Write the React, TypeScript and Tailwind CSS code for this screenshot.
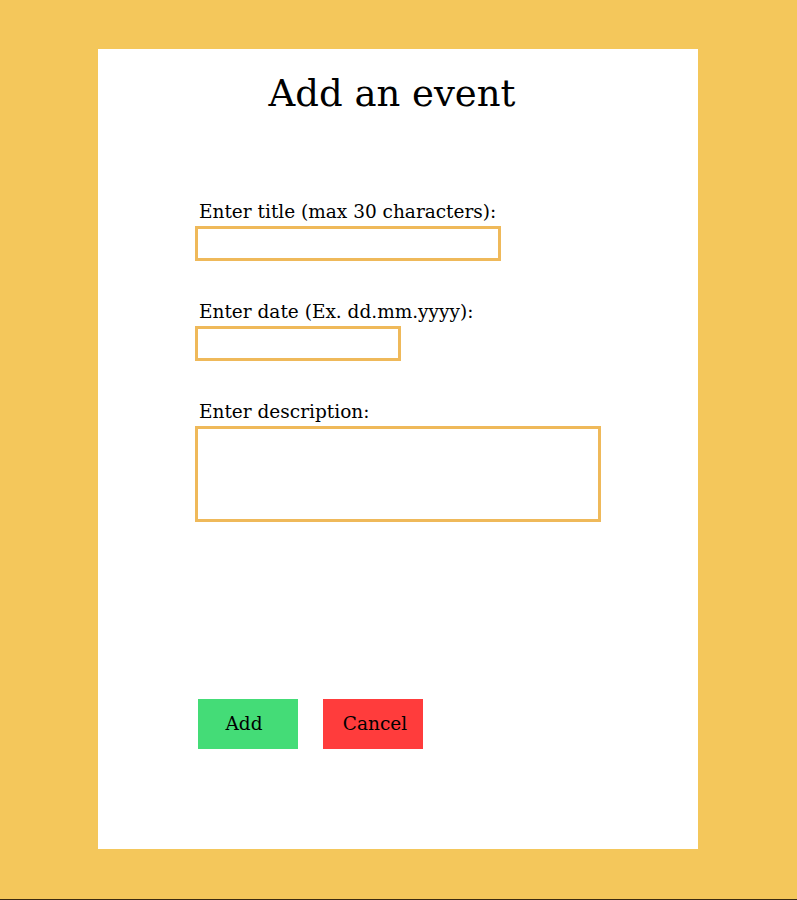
const Field = ({ label, width, height, className = "" }: { label: string; width: string; height: string; className?: string }) => (
  <div className={`flex flex-col items-start ${className}`}>
    <label className="pl-1 text-[18.5px] leading-[29px] text-black">{label}</label>
    <div className={`${width} ${height} border-[3px] border-[#efb95a] bg-white`} />
  </div>
);

export default function App() {
  return (
    <div
      className="min-h-[900px] bg-[#f4c75b] border-b border-[#3b2a10] pt-[49px] pl-[98px]"
      style={{ fontFamily: '"DejaVu Serif", serif' }}
    >
      <div className="w-[600px] h-[800px] bg-white flex flex-col pl-[97px]">
        <h1 className="-ml-[97px] pr-[12px] text-center text-[37px] leading-none pt-[26px] text-black">
          Add an event
        </h1>
        <div className="mt-[85px] flex flex-col">
          <Field label="Enter title (max 30 characters):" width="w-[306px]" height="h-[35px]" />
          <Field className="mt-[36px]" label="Enter date (Ex. dd.mm.yyyy):" width="w-[206px]" height="h-[35px]" />
          <Field className="mt-[36px]" label="Enter description:" width="w-[406px]" height="h-[96px]" />
        </div>
        <div className="mt-[177px] flex gap-[25px] pl-[3px]">
          <button className="w-[100px] h-[50px] bg-[#44dc77] text-[18.5px] text-black pr-[8px]">Add</button>
          <button className="w-[100px] h-[50px] bg-[#ff3c3c] text-[18.5px] text-black pl-[4px]">Cancel</button>
        </div>
      </div>
    </div>
  );
}
